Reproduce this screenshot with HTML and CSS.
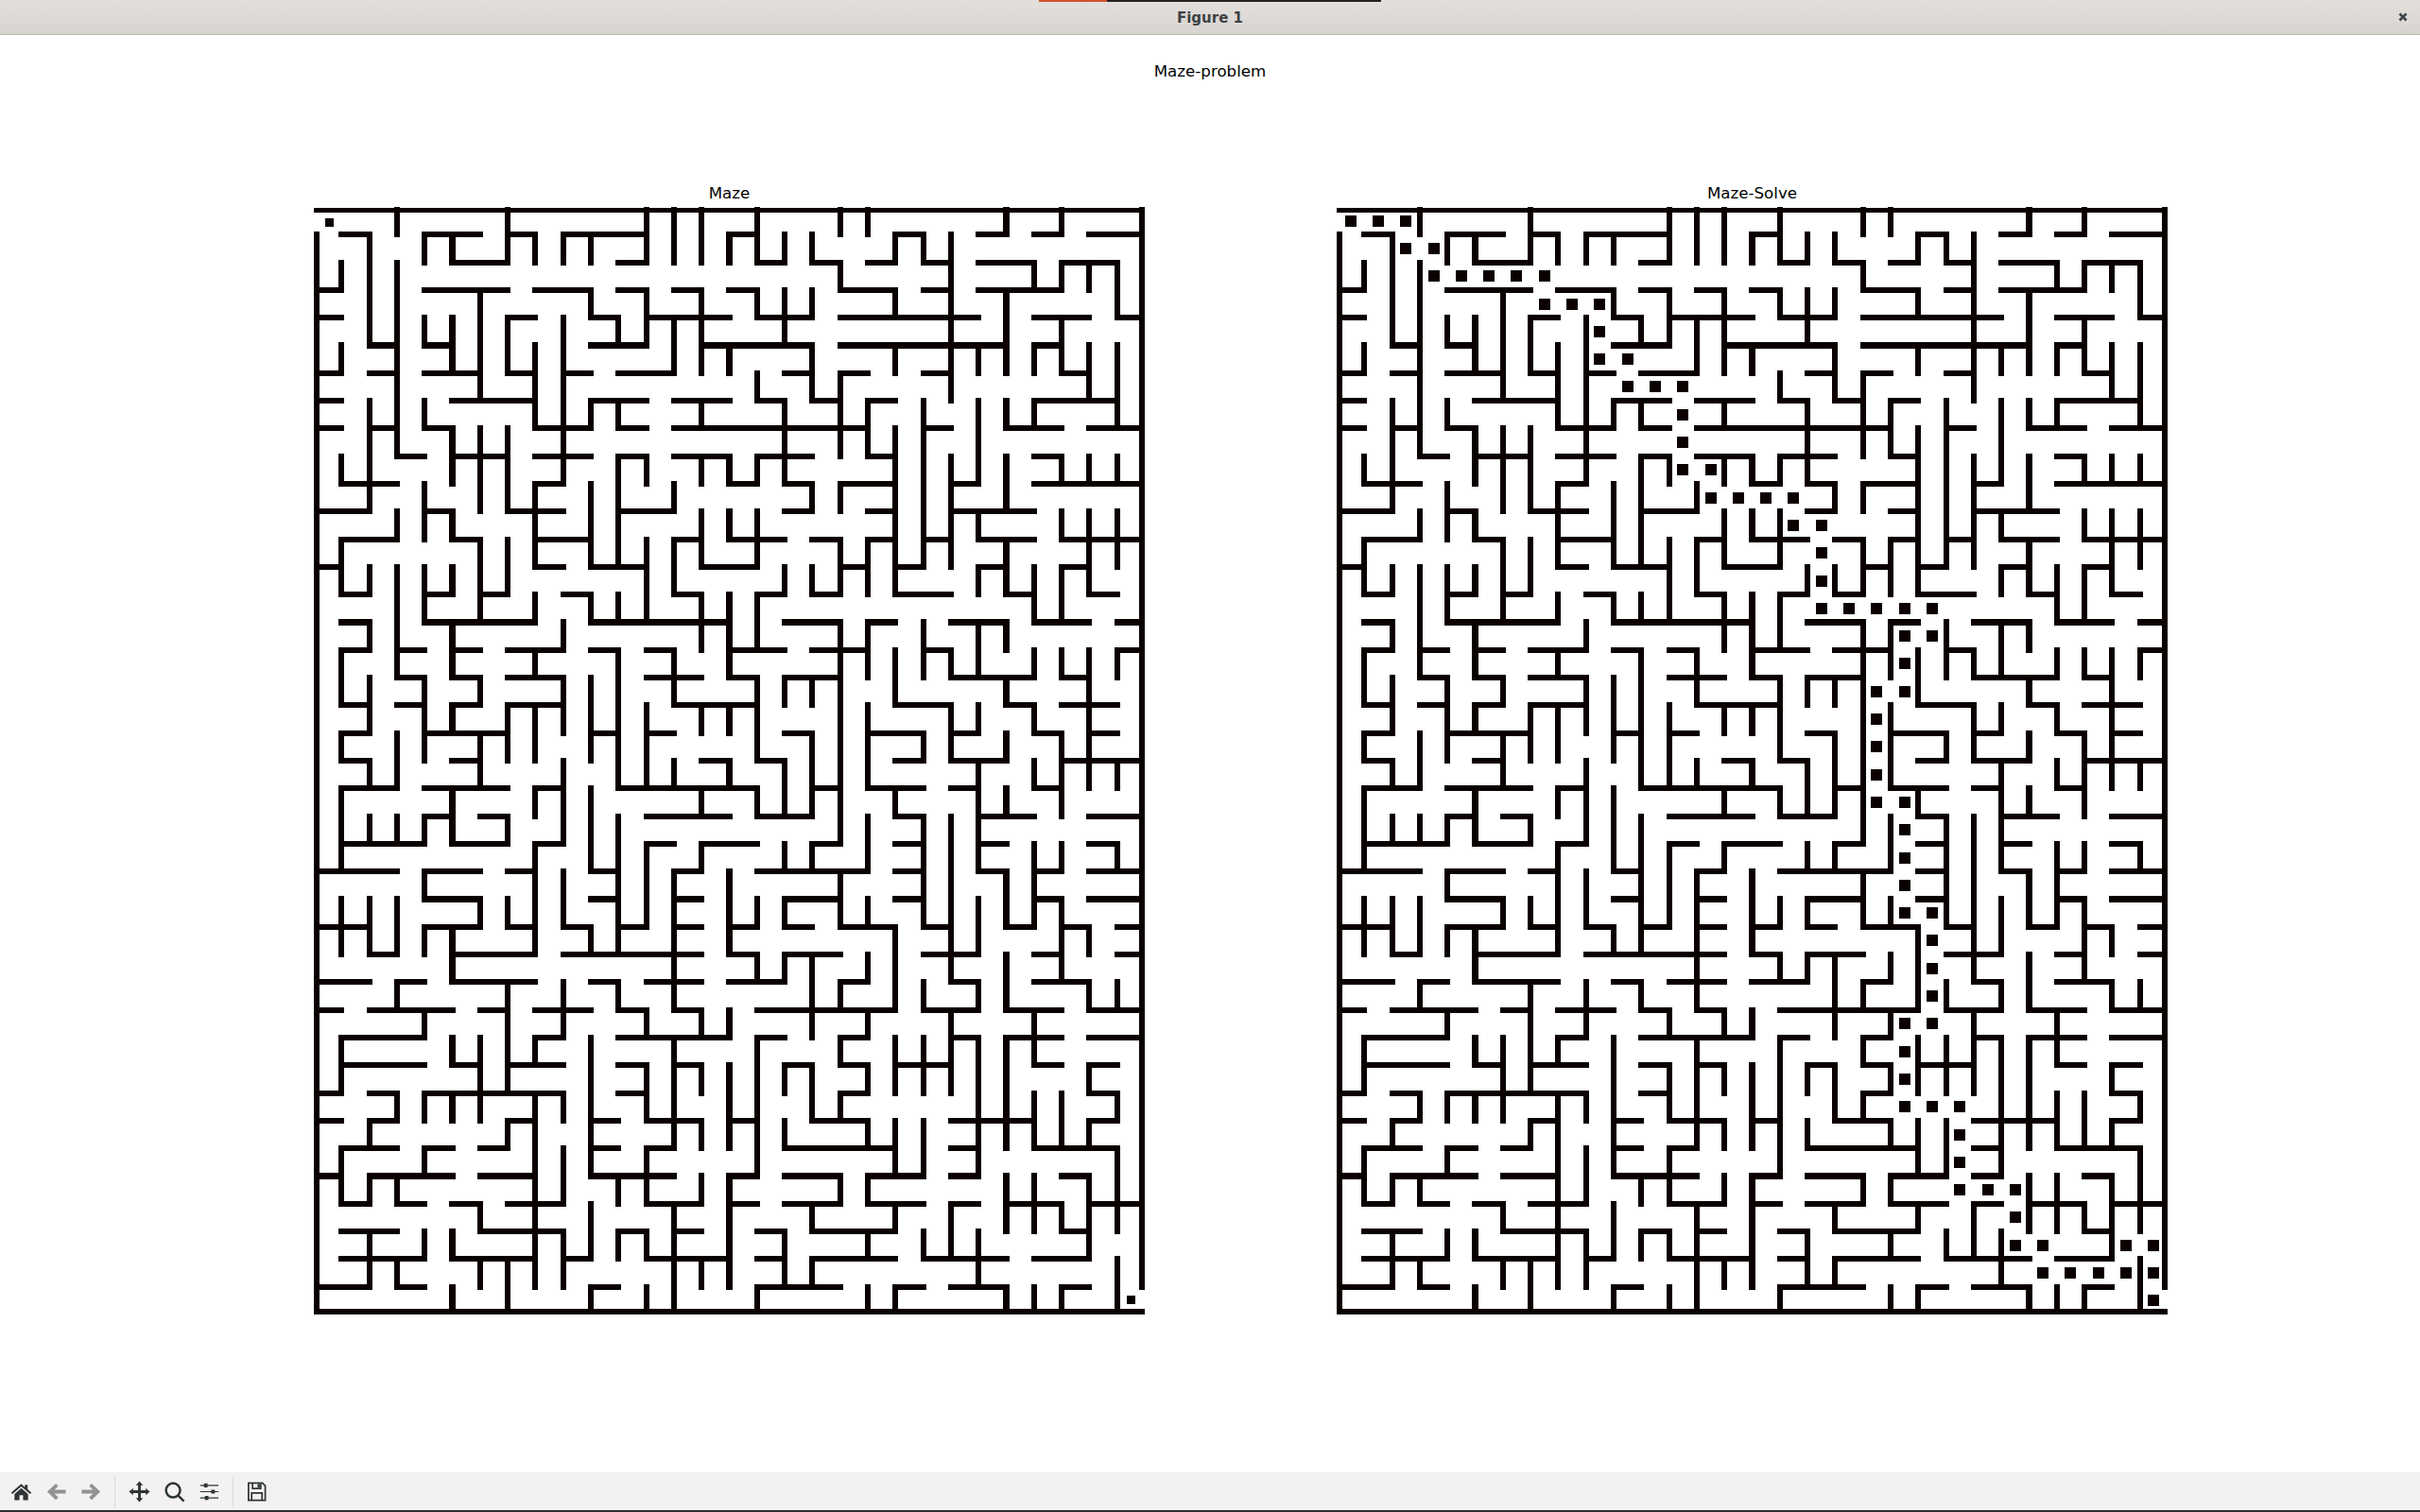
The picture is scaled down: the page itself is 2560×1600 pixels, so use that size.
FILE: index.html
```html
<!DOCTYPE html>
<html lang="en">
<head>
    <meta charset="UTF-8">
    <title>Figure 1</title>
    <link rel="stylesheet" href="styles.css">
</head>
<body>
    <div class="strip"><span class="strip-on"></span><span class="strip-off"></span></div>
    <header class="titlebar">
        <span></span>
        <span class="window-title">Figure 1</span>
        <svg class="close" viewBox="0 0 10 10"><path d="M1.5 1.5L8.5 8.5M8.5 1.5L1.5 8.5"/></svg>
    </header>

    <main class="figure">
        <h1 class="suptitle">Maze-problem</h1>
        <div class="axes-row">
            <div class="axes">
                <h2 class="axes-title">Maze</h2>
                <svg class="maze" viewBox="0 0 30 40" preserveAspectRatio="none">
                    <g id="walls">
                        <!-- outer frame -->
                        <path class="top-wall" d="M0 .118H30"/>
                        <path class="wall" d="M.107 1V40M29.894 0V39M0 39.895H30"/>
                        <!-- horizontal walls, one line per row -->
                        <path class="wall" d="
                            M1 1H2M4 1H6M7 1H8M9 1H12M15 1H16M21 1H22M24 1H25M26 1H27M28 1H30
                            M5 2H7M11 2H12M16 2H17M18 2H19M20 2H21M22 2H23M24 2H26M27 2H29
                            M0 3H1M4 3H7M8 3H10M11 3H12M13 3H14M15 3H16M19 3H21M22 3H23M24 3H27
                            M0 4H1M7 4H8M10 4H11M12 4H15M16 4H18M19 4H24M26 4H28M29 4H30
                            M2 5H3M4 5H5M10 5H12M14 5H18M19 5H25M26 5H27
                            M0 6H1M2 6H3M4 6H6M7 6H8M9 6H10M11 6H13M17 6H18M19 6H20M22 6H23M27 6H28
                            M0 7H1M5 7H8M10 7H12M13 7H15M16 7H17M18 7H19M20 7H21M26 7H29
                            M0 8H1M2 8H3M4 8H5M8 8H10M11 8H12M13 8H20M22 8H23M25 8H27M28 8H30
                            M3 9H4M5 9H7M8 9H10M11 9H12M13 9H15M16 9H18M20 9H21M26 9H27
                            M1 10H3M8 10H9M15 10H16M17 10H18M19 10H21M23 10H24M26 10H30
                            M0 11H2M4 11H5M7 11H9M11 11H13M17 11H18M20 11H21M23 11H26
                            M1 12H3M5 12H6M8 12H10M13 12H14M15 12H17M18 12H19M20 12H21M22 12H23M24 12H26M27 12H30
                            M0 13H1M8 13H9M10 13H12M14 13H16M19 13H20M21 13H22M24 13H25M27 13H28
                            M1 14H2M4 14H5M6 14H7M9 14H10M13 14H14M16 14H17M18 14H19M21 14H23M25 14H26M28 14H29
                            M1 15H2M4 15H8M10 15H15M17 15H19M20 15H21M23 15H25M26 15H28M29 15H30
                            M1 16H2M3 16H4M5 16H6M7 16H9M10 16H11M12 16H13M15 16H17M18 16H20M22 16H23M29 16H30
                            M3 17H4M5 17H6M7 17H9M12 17H14M15 17H16M17 17H19M23 17H26M27 17H28
                            M1 18H2M3 18H4M5 18H6M7 18H9M13 18H16M21 18H23M25 18H26M27 18H29
                            M1 19H2M4 19H7M10 19H11M12 19H13M17 19H18M20 19H22M23 19H24M26 19H27M28 19H29
                            M1 20H2M5 20H6M14 20H15M16 20H17M21 20H22M23 20H25M27 20H30
                            M1 21H3M4 21H7M8 21H9M11 21H16M18 21H19M20 21H22M23 21H24M26 21H27
                            M4 22H5M6 22H7M12 22H15M16 22H18M21 22H22M24 22H26M28 22H30
                            M1 23H4M5 23H7M8 23H9M12 23H13M14 23H16M18 23H19M21 23H22M24 23H25M28 23H29
                            M0 24H3M4 24H6M7 24H8M10 24H11M13 24H14M16 24H20M21 24H22M24 24H25M26 24H27M28 24H30
                            M4 25H6M10 25H11M13 25H14M17 25H19M21 25H22M26 25H27M28 25H30
                            M0 26H2M4 26H6M7 26H8M9 26H10M11 26H12M13 26H14M15 26H16M17 26H18M19 26H21M22 26H23M25 26H26M27 26H28M29 26H30
                            M2 27H3M5 27H8M9 27H14M15 27H16M17 27H19M22 27H24M26 27H27M29 27H30
                            M0 28H2M3 28H4M5 28H8M10 28H11M12 28H14M15 28H17M19 28H20M23 28H24M26 28H28
                            M0 29H1M2 29H5M6 29H7M8 29H10M11 29H12M13 29H14M16 29H21M22 29H24M25 29H27M28 29H30
                            M1 30H4M8 30H9M11 30H15M16 30H17M19 30H20M23 30H24M25 30H27M28 30H30
                            M1 31H4M5 31H6M7 31H9M11 31H12M13 31H14M17 31H18M19 31H20M21 31H23M26 31H27M28 31H29
                            M0 32H1M2 32H3M4 32H9M11 32H12M19 32H20M28 32H29
                            M0 33H1M2 33H3M7 33H8M10 33H11M12 33H14M15 33H16M18 33H20M23 33H26M28 33H29
                            M1 34H3M4 34H5M6 34H7M10 34H11M12 34H13M17 34H21M23 34H24M26 34H29
                            M0 35H1M2 35H5M6 35H8M10 35H13M15 35H16M17 35H19M20 35H22M23 35H24M27 35H28
                            M1 36H2M3 36H4M5 36H6M7 36H9M12 36H14M15 36H16M17 36H19M20 36H22M23 36H24M25 36H27M28 36H30
                            M1 37H3M6 37H9M11 37H12M13 37H14M16 37H17M18 37H21M27 37H28
                            M1 38H4M5 38H8M9 38H10M12 38H15M16 38H17M18 38H21M22 38H25M26 38H28
                            M0 39H2M3 39H4M10 39H11M16 39H19M21 39H22M23 39H25M27 39H28"/>
                        <!-- vertical walls, one line per column -->
                        <path class="wall" d="
                            M1 2V3M1 5V6M1 9V10M1 12V14M1 16V18M1 19V20M1 21V24M1 25V27M1 30V32M1 34V36
                            M2 1V5M2 7V11M2 13V14M2 15V16M2 17V19M2 20V21M2 22V23M2 25V27M2 33V34M2 35V36M2 37V39
                            M3 0V1M3 2V9M3 11V12M3 13V17M3 19V21M3 22V23M3 25V27M3 28V29M3 32V33M3 35V36M3 38V39
                            M4 1V2M4 4V5M4 7V8M4 10V12M4 13V15M4 17V20M4 22V23M4 24V25M4 26V27M4 29V30M4 32V33M4 34V35M4 37V38
                            M5 1V2M5 4V6M5 8V10M5 11V12M5 13V14M5 15V17M5 18V19M5 21V23M5 26V28M5 30V31M5 32V33M5 37V38M5 39V40
                            M6 3V7M6 8V11M6 12V15M6 17V18M6 19V21M6 25V26M6 30V33M6 36V37M6 38V39
                            M7 0V2M7 4V6M7 8V11M7 12V14M7 18V20M7 22V23M7 25V26M7 28V32M7 33V34M7 38V40
                            M8 1V2M8 5V8M8 10V13M8 14V15M8 16V17M8 18V20M8 21V22M8 23V27M8 30V31M8 32V39
                            M9 1V2M9 4V10M9 15V16M9 17V19M9 20V23M9 24V26M9 28V30M9 32V33M9 34V36M9 37V39
                            M10 1V2M10 3V4M10 7V8M10 10V13M10 14V15M10 17V20M10 21V24M10 26V27M10 30V35M10 36V38M10 39V40
                            M11 4V5M11 7V8M11 9V13M11 14V15M11 16V21M11 22V27M11 28V29M11 35V36M11 37V38
                            M12 0V2M12 3V5M12 9V10M12 12V15M12 18V21M12 23V26M12 29V30M12 31V33M12 34V36M12 37V38M12 39V40
                            M13 0V2M13 4V6M13 10V11M13 12V14M13 16V18M13 20V21M13 24V29M13 30V34M13 36V40
                            M14 0V2M14 3V6M14 7V8M14 9V10M14 11V13M14 14V16M14 18V19M14 21V22M14 23V24M14 29V30M14 31V32M14 33V34M14 35V36M14 38V39
                            M15 1V2M15 5V6M15 9V10M15 11V12M15 14V17M15 18V19M15 20V21M15 24V27M15 29V30M15 31V34M15 35V39
                            M16 0V2M16 3V4M16 6V7M16 9V10M16 11V13M16 14V16M16 17V20M16 21V22M16 25V26M16 27V28M16 30V35M16 39V40
                            M17 1V2M17 3V5M17 7V10M17 13V14M17 17V18M17 20V22M17 23V24M17 25V26M17 27V28M17 31V32M17 33V34M17 37V39
                            M18 1V2M18 3V4M18 5V7M18 10V11M18 13V14M18 17V18M18 19V22M18 23V24M18 27V30M18 31V33M18 36V37M18 38V39
                            M19 0V1M19 2V3M19 6V9M19 10V11M19 12V14M19 15V23M19 24V26M19 28V29M19 30V31M19 32V33M19 35V36
                            M20 0V1M20 7V9M20 12V14M20 15V17M20 18V21M20 22V24M20 25V26M20 27V28M20 29V30M20 31V32M20 33V34M20 35V36M20 37V38M20 39V40
                            M21 1V2M21 3V4M21 5V6M21 8V14M21 16V18M21 21V22M21 26V29M21 30V32M21 33V35M21 36V37M21 39V40
                            M22 1V2M22 7V13M22 15V17M22 19V20M22 22V26M22 28V29M22 30V32M22 33V35M22 37V38
                            M23 1V7M23 9V13M23 16V17M23 18V20M23 22V28M23 29V32M23 36V38
                            M24 5V6M24 7V10M24 11V12M24 13V14M24 15V17M24 18V19M24 20V24M24 25V27M24 28V29M24 30V35M24 37V39
                            M25 0V1M25 3V6M25 7V8M25 9V11M25 12V14M25 15V16M25 17V18M25 19V20M25 21V22M25 24V26M25 27V29M25 30V34M25 35V37M25 39V40
                            M26 2V3M26 5V6M26 7V8M26 13V15M26 16V17M26 18V19M26 20V21M26 23V26M26 29V31M26 32V34M26 35V37M26 39V40
                            M27 0V1M27 2V3M27 4V6M27 9V10M27 11V12M27 13V15M27 16V17M27 19V22M27 23V24M27 25V28M27 32V34M27 36V37M27 39V40
                            M28 2V3M28 5V7M28 9V10M28 11V14M28 16V21M28 26V27M28 28V29M28 31V32M28 33V34M28 35V38
                            M29 2V4M29 5V8M29 9V10M29 11V13M29 16V17M29 20V21M29 23V24M29 28V29M29 32V33M29 34V37M29 38V40"/>
                    </g>
                    <path class="marker" d="M.55 .55h0M29.5 39.47h0"/>
                </svg>
            </div>
            <div class="axes">
                <h2 class="axes-title">Maze-Solve</h2>
                <svg class="maze" viewBox="0 0 30 40" preserveAspectRatio="none">
                    <use href="#walls"/>
                    <!-- solved route, one square per visited cell -->
                    <path class="route" d="
                        M.5 .5h0M1.5 .5h0M2.5 .5h0M2.5 1.5h0M3.5 1.5h0M3.5 2.5h0M4.5 2.5h0M5.5 2.5h0M6.5 2.5h0M7.5 2.5h0
                        M7.5 3.5h0M8.5 3.5h0M9.5 3.5h0M9.5 4.5h0M9.5 5.5h0M10.5 5.5h0M10.5 6.5h0M11.5 6.5h0M12.5 6.5h0
                        M12.5 7.5h0M12.5 8.5h0M12.5 9.5h0M13.5 9.5h0M13.5 10.5h0M14.5 10.5h0M15.5 10.5h0M16.5 10.5h0
                        M16.5 11.5h0M17.5 11.5h0M17.5 12.5h0M17.5 13.5h0M17.5 14.5h0M18.5 14.5h0M19.5 14.5h0M20.5 14.5h0M21.5 14.5h0
                        M21.5 15.5h0M20.5 15.5h0M20.5 16.5h0M20.5 17.5h0M19.5 17.5h0M19.5 18.5h0M19.5 19.5h0M19.5 20.5h0M19.5 21.5h0M20.5 21.5h0
                        M20.5 22.5h0M20.5 23.5h0M20.5 24.5h0M20.5 25.5h0M21.5 25.5h0M21.5 26.5h0M21.5 27.5h0M21.5 28.5h0M21.5 29.5h0M20.5 29.5h0
                        M20.5 30.5h0M20.5 31.5h0M20.5 32.5h0M21.5 32.5h0M22.5 32.5h0M22.5 33.5h0M22.5 34.5h0M22.5 35.5h0M23.5 35.5h0M24.5 35.5h0
                        M24.5 36.5h0M24.5 37.5h0M25.5 37.5h0M25.5 38.5h0M26.5 38.5h0M27.5 38.5h0M28.5 38.5h0M28.5 37.5h0M29.5 37.5h0M29.5 38.5h0M29.5 39.5h0"/>
                </svg>
            </div>
        </div>
    </main>

    <footer class="toolbar">
        <button class="tool">
            <svg viewBox="0 0 24 24"><path class="icon-fill" d="M12 3.500L.8 13l1.400 1.600L12 6.300l9.800 8.300 1.400-1.600-4.200-3.600V4.500h-3v2.500zM12 8.200L4.500 14.500V21.500H10v-5.500h4v5.500h5.500v-7z"/></svg>
        </button>
        <button class="tool">
            <svg viewBox="0 0 24 24"><path class="icon-off" d="M11.500 3l2.800 2.800-4.300 4.200h12.500v4H10l4.300 4.200-2.800 2.800-9.500-9z"/></svg>
        </button>
        <button class="tool">
            <svg viewBox="0 0 24 24"><path class="icon-off" d="M12.500 3L9.700 5.800l4.300 4.200H1.500v4H14l-4.300 4.200 2.800 2.800 9.500-9z"/></svg>
        </button>
        <span class="separator"></span>
        <button class="tool">
            <svg viewBox="0 0 24 24"><path class="icon-fill" d="M12 .5L16 5h-2.500v5.500H19V8l4.500 4-4.500 4v-2.500h-5.500V19H16l-4 4.500L8 19h2.500v-5.500H5V16L.5 12 5 8v2.500h5.500V5H8z"/></svg>
        </button>
        <button class="tool">
            <svg viewBox="0 0 24 24"><circle class="icon-line" cx="10.500" cy="10.500" r="7.800"/><path class="icon-line" d="M16 16l6.500 6.500"/></svg>
        </button>
        <button class="tool">
            <svg viewBox="0 0 24 24"><path class="icon-thin" d="M2 5h20M2 12h20M2 19h20"/><path class="icon-fill" d="M6 2.800h4v4.400H6zM14 9.800h4v4.400h-4zM7 16.800h4v4.400H7z"/></svg>
        </button>
        <span class="separator"></span>
        <button class="tool">
            <svg viewBox="0 0 24 24"><path class="icon-save" d="M3 2.500h15.500l3 3v16H3zM7.500 2.500v6h9v-6M6.500 21.500v-8h11.500v8"/><path class="icon-fill" d="M13 3.500h2.500v4H13z"/></svg>
        </button>
    </footer>
</body>
</html>
```

FILE: styles.css
```css
* {
    box-sizing: border-box;
}

body {
    margin: 0;
    height: 100vh;
    display: flex;
    flex-direction: column;
    position: relative;
    overflow: hidden;
    background-color: white;
    font-family: "DejaVu Sans", sans-serif;
    color: black;
}

/* thin bar lying over the top of the title bar */
.strip {
    position: absolute;
    top: 0;
    left: 1099px;
    display: flex;
    height: 2px;
}

.strip-on {
    width: 72px;
    background-color: #d3522b;
}

.strip-off {
    width: 290px;
    background-color: #222222;
}

.titlebar {
    height: 37px;
    flex: none;
    display: grid;
    grid-template-columns: 1fr auto 1fr;
    align-items: center;
    background: linear-gradient(#e2dfdc, #d8d5d1);
    border-bottom: 1px solid #bdb7ad;
}

.window-title {
    padding-top: 1px;
    font-size: 15px;
    font-weight: bold;
    color: #3d4244;
}

.close {
    justify-self: end;
    width: 10px;
    height: 10px;
    margin-right: 13px;
}

.close path {
    fill: none;
    stroke: #3d4244;
    stroke-width: 2.6;
}

.figure {
    flex: 1;
    display: flex;
    flex-direction: column;
}

.suptitle {
    margin: 28px 0 0 0;
    height: 21px;
    line-height: 21px;
    font-size: 16.67px;
    font-weight: normal;
    text-align: center;
}

.axes-row {
    display: flex;
    gap: 203px;
    padding-left: 332px;
    margin-top: 108px;
}

.axes {
    width: 879px;
}

.axes-title {
    margin: 1px 0 4px 0;
    height: 20px;
    line-height: 20px;
    font-size: 16.67px;
    font-weight: normal;
    text-align: center;
}

.maze {
    display: block;
    width: 879px;
    height: 1172px;
}

.wall,
.top-wall,
.marker,
.route {
    fill: none;
    stroke: #0a0000;
    stroke-linecap: square;
    shape-rendering: crispEdges;
}

.wall {
    stroke-width: .205;
}

.top-wall {
    stroke-width: .16;
    stroke-linecap: butt;
}

.marker {
    stroke-width: .307;
}

.route {
    stroke-width: .41;
}

.toolbar {
    height: 42px;
    flex: none;
    display: flex;
    align-items: center;
    padding: 0 0 0 4px;
    background-color: #f3f2f1;
    border-bottom: 2px solid #2e2e2e;
}

.tool {
    width: 37px;
    height: 36px;
    padding: 0;
    border: none;
    background: none;
    display: flex;
    align-items: center;
    justify-content: center;
}

.tool svg {
    width: 23px;
    height: 23px;
}

.separator {
    width: 1px;
    height: 33px;
    margin: 0 6.5px 0 6px;
    background-color: #dcdad8;
}

.icon-fill {
    fill: #2f3436;
}

.icon-off {
    fill: #929292;
}

.icon-line {
    fill: none;
    stroke: #2f3436;
    stroke-width: 2.6;
}

.icon-thin {
    fill: none;
    stroke: #2f3436;
    stroke-width: 1.3;
}

.icon-save {
    fill: none;
    stroke: #2f3436;
    stroke-width: 1.8;
}
```
